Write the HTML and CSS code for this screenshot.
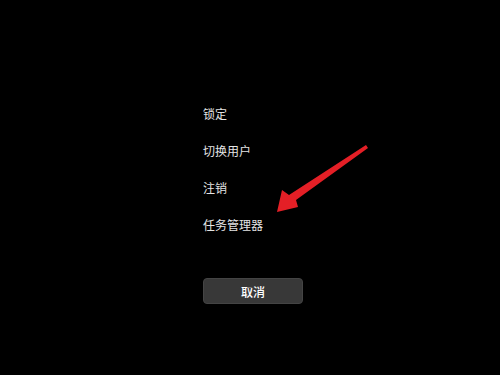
FILE: index.html
```html
<!DOCTYPE html>
<html>
<head>
<meta charset="utf-8">
<link rel="stylesheet" href="styles.css">
</head>
<body>
<div class="screen">
  <ul class="menu">
    <li>锁定</li>
    <li>切换用户</li>
    <li>注销</li>
    <li>任务管理器</li>
  </ul>
  <button class="cancel">取消</button>
  <svg class="arrow" width="500" height="375" viewBox="0 0 500 375">
    <polygon points="366,145 368,148 296,200 298,207 277,212 282,190 289,195" fill="#e41f26"/>
  </svg>
</div>
</body>
</html>
```
FILE: styles.css
```css
html, body {
  margin: 0;
  padding: 0;
  background: #000;
}
.screen {
  position: relative;
  width: 500px;
  height: 375px;
  background: #000;
  overflow: hidden;
  font-family: "Noto Sans CJK SC", "Noto Sans", sans-serif;
  box-sizing: border-box;
  padding: 108px 0 0 203px;
}
.menu {
  list-style: none;
  margin: 0;
  padding: 0;
  display: flex;
  flex-direction: column;
  gap: 25px;
}
.menu li {
  color: #e4e4e4;
  font-size: 12px;
  line-height: 12px;
  height: 12px;
}
.cancel {
  display: block;
  margin-top: 47px;
  width: 100px;
  height: 26px;
  background: #383838;
  border: 1px solid #444;
  border-radius: 4px;
  color: #fff;
  font-family: "Noto Sans CJK SC", "Noto Sans", sans-serif;
  font-size: 12px;
  font-weight: 500;
  padding: 0;
}
.arrow {
  position: absolute;
  left: 0;
  top: 0;
}
```
